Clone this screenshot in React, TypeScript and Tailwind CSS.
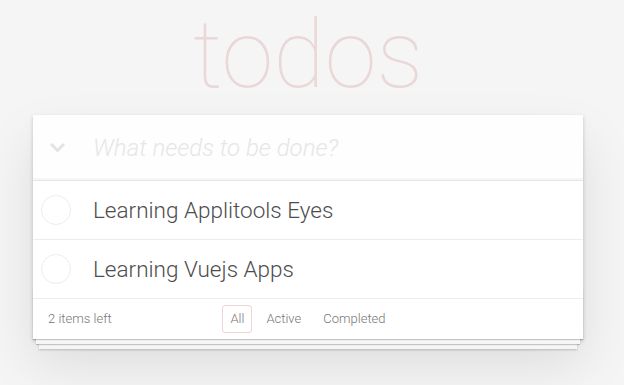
import React from 'react';

const todos = [
  { id: 1, title: 'Learning Applitools Eyes' },
  { id: 2, title: 'Learning Vuejs Apps' },
];

const filters = ['All', 'Active', 'Completed'];

const App: React.FC = () => {
  return (
    <div
      className="min-h-screen bg-[#f5f5f5] text-[#4d4d4d] font-light"
      style={{ fontFamily: 'Roboto, "Liberation Sans", Arial, sans-serif' }}
    >
      <div className="w-[550px] ml-[33px] pt-[8px]">
        <h1 className="text-center text-[94px] leading-[94px] font-thin text-[rgba(175,47,47,0.15)] mb-[13px]">
          todos
        </h1>

        <section className="bg-white relative shadow-[0_2px_4px_0_rgba(0,0,0,0.2),0_25px_50px_0_rgba(0,0,0,0.1)]">
          <header className="relative">
            <span className="absolute left-[16px] top-[27px] flex items-center justify-center">
              <svg width="17" height="11" viewBox="0 0 17 11">
                <polyline
                  points="2,2 8.5,8.5 15,2"
                  fill="none"
                  stroke="#e3e3e3"
                  strokeWidth="3"
                />
              </svg>
            </span>
            <input
              className="w-full h-[65px] pl-[60px] pr-4 text-[24px] bg-[rgba(0,0,0,0.003)] shadow-[inset_0_-2px_1px_rgba(0,0,0,0.03)] outline-none placeholder:italic placeholder:font-light placeholder:text-[#e6e6e6]"
              placeholder="What needs to be done?"
            />
          </header>

          <ul className="border-t border-[#e6e6e6]">
            {todos.map((todo) => (
              <li
                key={todo.id}
                className="relative flex items-center h-[59px] text-[22.5px] border-b border-[#ededed]"
              >
                <span className="absolute left-[8px] w-[30px] h-[30px] rounded-full border border-[#ededed]" />
                <label className="block pl-[60px] pr-[15px] leading-[28px]">
                  {todo.title}
                </label>
              </li>
            ))}
          </ul>

          <footer className="relative flex items-center h-[40px] px-[15px] text-[13px] text-[#777]">
            <div className="absolute left-0 right-0 bottom-0 h-[50px] overflow-hidden shadow-[0_1px_1px_rgba(0,0,0,0.2),0_8px_0_-3px_#f6f6f6,0_9px_1px_-3px_rgba(0,0,0,0.2),0_16px_0_-6px_#f6f6f6,0_17px_2px_-6px_rgba(0,0,0,0.2)]" />
            <span className="relative">
              <strong className="font-light">2</strong> items left
            </span>
            <ul className="absolute left-0 right-0 flex justify-center">
              {filters.map((f) => (
                <li key={f}>
                  <a
                    className={`block m-[3px] px-[7px] py-[3px] rounded-[3px] border ${
                      f === 'All' ? 'border-[rgba(175,47,47,0.2)]' : 'border-transparent'
                    }`}
                  >
                    {f}
                  </a>
                </li>
              ))}
            </ul>
          </footer>
        </section>
      </div>
    </div>
  );
};

export default App;
